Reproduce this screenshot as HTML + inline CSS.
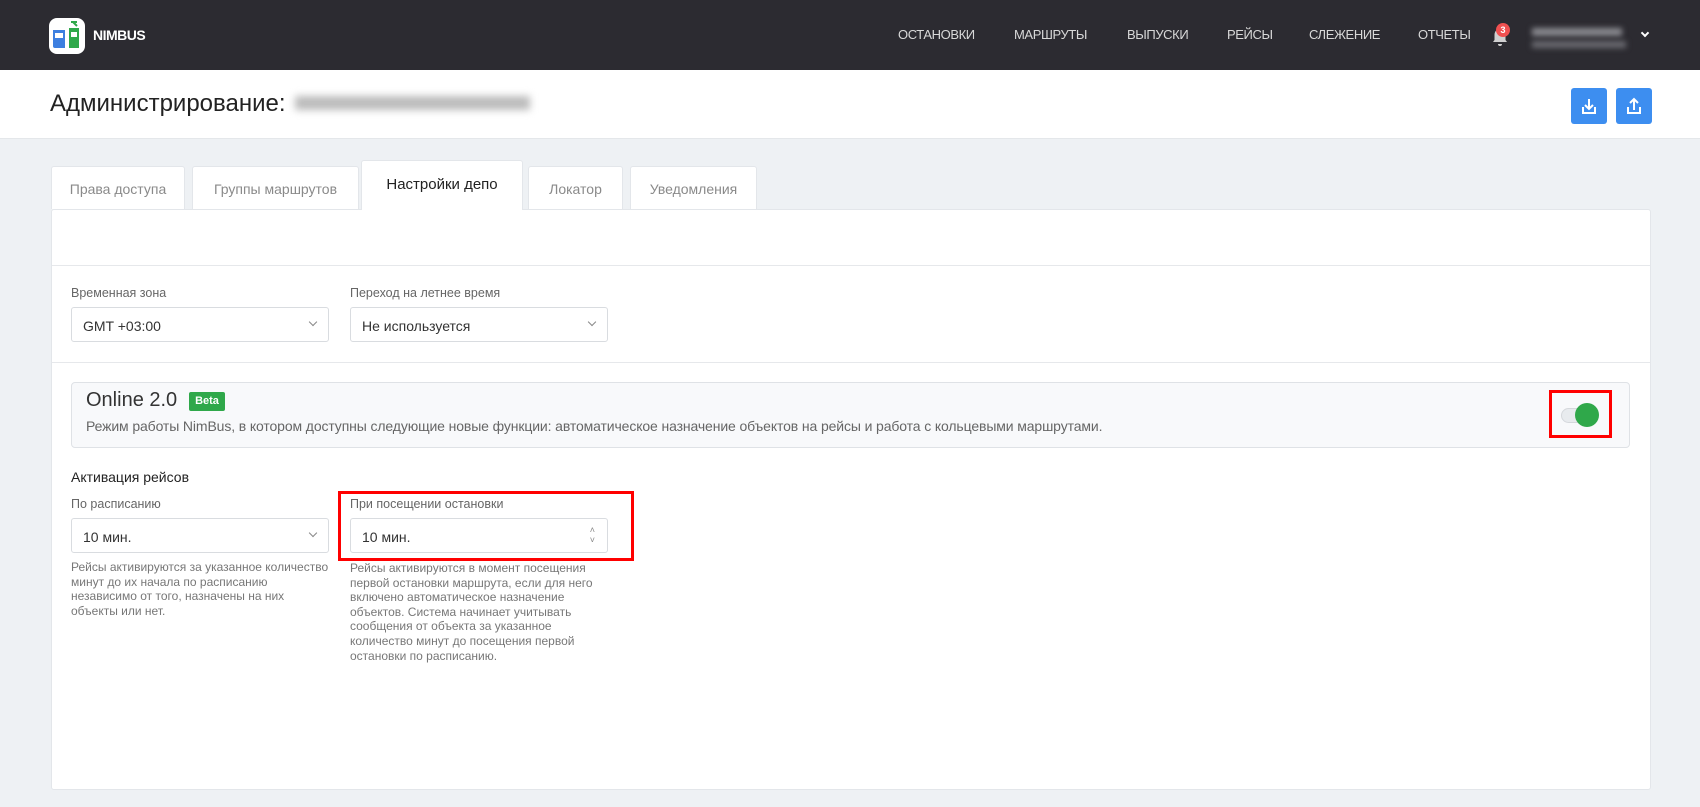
<!DOCTYPE html>
<html><head><meta charset="utf-8"><style>
*{box-sizing:border-box;margin:0;padding:0}
body{width:1700px;height:807px;overflow:hidden;background:#eef1f4;font-family:"Liberation Sans","DejaVu Sans",sans-serif;position:relative;color:#333}
.a{position:absolute}
.nav{left:0;top:0;width:1700px;height:70px;background:#2c2b31}
.ni{top:27px;font-size:13px;color:#d8d8d8;letter-spacing:-0.4px;white-space:nowrap}
.hdr{left:0;top:70px;width:1700px;height:69px;background:#fff;border-bottom:1px solid #e4e7ea}
.btn{width:36px;height:36px;background:#3d8ef0;border-radius:3px;top:88px}
.tab{background:#fff;border:1px solid #e3e6ea;border-bottom:none;border-radius:3px 3px 0 0;font-size:14px;color:#8a8a8a;text-align:center;line-height:44px;top:166px;height:43px}
.panel{left:51px;top:209px;width:1600px;height:581px;background:#fff;border:1px solid #e3e6ea;border-radius:3px}
.lbl{font-size:12.5px;color:#666}
.sel{height:35px;border:1px solid #d9dce0;border-radius:3px;background:#fff;font-size:14px;color:#333;padding:10px 11px;width:258px}
.chev{position:absolute;right:12px;top:11px;width:6px;height:6px;border-right:1px solid #888;border-bottom:1px solid #888;transform:rotate(45deg)}
.help{font-size:12px;color:#777;line-height:14.6px;white-space:nowrap}
</style></head><body>
<div class="a nav"></div>
<svg class="a" style="left:49px;top:18px" width="36" height="36" viewBox="0 0 36 36"><rect x="0" y="0" width="36" height="36" rx="8" fill="#fff"/><path d="M4 12h12v18H6a2 2 0 0 1-2-2z" fill="#3d7fe0"/><rect x="6" y="15" width="8" height="5" fill="#fff"/><path d="M20 10h10v20H20z" fill="#2fa84a"/><rect x="22" y="14" width="6" height="5" fill="#fff"/><path d="M24 4l4 4M22 4h6" stroke="#2fa84a" stroke-width="2"/></svg>
<div class="a" style="left:93px;top:27px;font-size:14px;font-weight:bold;color:#fff;letter-spacing:-0.5px">NIMBUS</div>
<div class="a ni" style="left:898px">ОСТАНОВКИ</div>
<div class="a ni" style="left:1014px">МАРШРУТЫ</div>
<div class="a ni" style="left:1127px">ВЫПУСКИ</div>
<div class="a ni" style="left:1227px">РЕЙСЫ</div>
<div class="a ni" style="left:1309px">СЛЕЖЕНИЕ</div>
<div class="a ni" style="left:1418px">ОТЧЕТЫ</div>
<svg class="a" style="left:1491px;top:27px" width="18" height="20" viewBox="0 0 18 20"><path d="M9 2c-3.5 0-5.5 2.5-5.5 6v5L2 15h14l-1.5-2V8c0-3.5-2-6-5.5-6z M7 17h4a2 2 0 0 1-4 0z" fill="#d0d0d0"/></svg>
<div class="a" style="left:1496px;top:23px;width:14px;height:14px;border-radius:7px;background:#f05050;color:#fff;font-size:9px;text-align:center;line-height:14px;font-weight:bold">3</div>
<div class="a" style="left:1532px;top:28px;width:90px;height:8px;background:#8a8a90;filter:blur(3px)"></div>
<div class="a" style="left:1532px;top:41px;width:94px;height:7px;background:#6a6a70;filter:blur(3px)"></div>
<div class="a" style="left:1642px;top:30px;width:6px;height:6px;border-right:2px solid #fff;border-bottom:2px solid #fff;transform:rotate(45deg)"></div>
<div class="a hdr"></div>
<div class="a" style="left:50px;top:90px;font-size:24px;color:#222">Администрирование:</div>
<div class="a" style="left:295px;top:96px;width:235px;height:14px;background:#bbb;filter:blur(4px)"></div>
<div class="a btn" style="left:1571px"><svg width="36" height="36" viewBox="0 0 36 36"><path d="M18 11v10M14 17l4 4 4-4M12 19v6h12v-6" stroke="#fff" stroke-width="2" fill="none"/></svg></div>
<div class="a btn" style="left:1616px"><svg width="36" height="36" viewBox="0 0 36 36"><path d="M18 22V11M14 15l4-4 4 4M12 19v6h12v-6" stroke="#fff" stroke-width="2" fill="none"/></svg></div>
<div class="a tab" style="left:51px;width:134px">Права доступа</div>
<div class="a tab" style="left:192px;width:167px">Группы маршрутов</div>
<div class="a tab" style="left:361px;width:162px;top:160px;height:50px;line-height:48px;color:#222;font-size:15px;z-index:2">Настройки депо</div>
<div class="a tab" style="left:528px;width:95px">Локатор</div>
<div class="a tab" style="left:630px;width:127px">Уведомления</div>
<div class="a panel"></div>
<div class="a" style="left:52px;top:265px;width:1598px;height:1px;background:#e6e8eb"></div>
<div class="a" style="left:52px;top:362px;width:1598px;height:1px;background:#e6e8eb"></div>
<div class="a lbl" style="left:71px;top:286px">Временная зона</div>
<div class="a lbl" style="left:350px;top:286px">Переход на летнее время</div>
<div class="a sel" style="left:71px;top:307px">GMT +03:00<span class="chev"></span></div>
<div class="a sel" style="left:350px;top:307px">Не используется<span class="chev"></span></div>
<div class="a" style="left:71px;top:382px;width:1559px;height:66px;background:#f8f9fb;border:1px solid #dfe2e6;border-radius:4px"></div>
<div class="a" style="left:86px;top:389px;font-size:20px;color:#333">Online 2.0</div>
<div class="a" style="left:189px;top:392px;width:36px;height:19px;background:#2fa84a;border-radius:2px;color:#fff;font-size:11px;font-weight:bold;text-align:center;line-height:19px">Beta</div>
<div class="a" style="left:86px;top:418px;font-size:14px;color:#666;letter-spacing:-0.12px">Режим работы NimBus, в котором доступны следующие новые функции: автоматическое назначение объектов на рейсы и работа с кольцевыми маршрутами.</div>
<div class="a" style="left:1549px;top:390px;width:63px;height:48px;border:3px solid #f00"></div>
<div class="a" style="left:1561px;top:408px;width:34px;height:15px;background:#e8ebee;border:1px solid #d5d8dc;border-radius:8px"></div>
<div class="a" style="left:1575px;top:403px;width:24px;height:24px;border-radius:12px;background:#2fa84a"></div>
<div class="a" style="left:71px;top:469px;font-size:14px;color:#222">Активация рейсов</div>
<div class="a lbl" style="left:71px;top:497px">По расписанию</div>
<div class="a lbl" style="left:350px;top:497px">При посещении остановки</div>
<div class="a sel" style="left:71px;top:518px">10 мин.<span class="chev"></span></div>
<div class="a sel" style="left:350px;top:518px">10 мин.<span style="position:absolute;right:12px;top:6px;font-size:9px;color:#888;line-height:10px">˄<br>˅</span></div>
<div class="a" style="left:338px;top:491px;width:296px;height:70px;border:3px solid #f00"></div>
<div class="a help" style="left:71px;top:560px">Рейсы активируются за указанное количество<br>минут до их начала по расписанию<br>независимо от того, назначены на них<br>объекты или нет.</div>
<div class="a help" style="left:350px;top:561px">Рейсы активируются в момент посещения<br>первой остановки маршрута, если для него<br>включено автоматическое назначение<br>объектов. Система начинает учитывать<br>сообщения от объекта за указанное<br>количество минут до посещения первой<br>остановки по расписанию.</div>
</body></html>
